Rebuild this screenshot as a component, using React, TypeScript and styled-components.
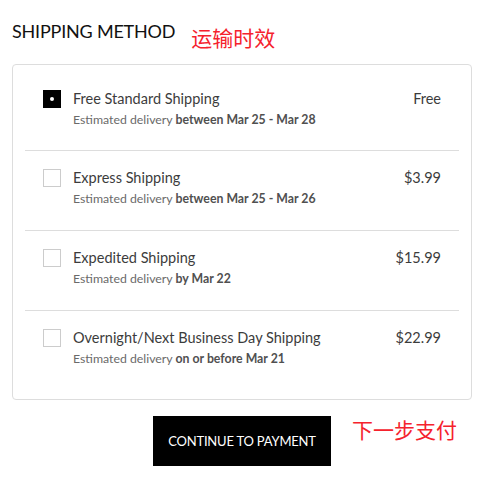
import React, {useState} from 'react'
import styled, {createGlobalStyle} from 'styled-components'

type TShippingOption = {
    id: string
    title: string
    price: string
    deliveryPrefix: string
    deliveryDate: string
}

const options: TShippingOption[] = [
    {id: 'standard', title: 'Free Standard Shipping', price: 'Free', deliveryPrefix: 'between', deliveryDate: 'Mar 25 - Mar 28'},
    {id: 'express', title: 'Express Shipping', price: '$3.99', deliveryPrefix: 'between', deliveryDate: 'Mar 25 - Mar 26'},
    {id: 'expedited', title: 'Expedited Shipping', price: '$15.99', deliveryPrefix: 'by', deliveryDate: 'Mar 22'},
    {id: 'overnight', title: 'Overnight/Next Business Day Shipping', price: '$22.99', deliveryPrefix: 'on or before', deliveryDate: 'Mar 21'},
]

const GlobalStyle = createGlobalStyle`
  body {
    margin: 0;
    background: #fff;
    font-family: "Lato", "Liberation Sans", sans-serif;
    color: #222;
  }
`

const Page = styled.div`
  width: 460px;
  padding: 18px 12px;
`

const Header = styled.div`
  display: flex;
  align-items: flex-start;
  gap: 16px;
  height: 46px;
`

const Title = styled.h2`
  margin: 0;
  padding-top: 2px;
  font-size: 18px;
  font-weight: 400;
  letter-spacing: -0.2px;
  color: #111;
`

const Note = styled.span<{offset?: number}>`
  font-family: "Noto Sans CJK SC", sans-serif;
  font-size: 21px;
  line-height: 1;
  color: #f5222d;
  padding-top: ${p => p.offset ?? 0}px;
`

const Card = styled.div`
  border: 1px solid #ddd;
  border-radius: 4px;
  padding: 5px 12px 9px;
`

const Row = styled.label`
  display: flex;
  align-items: flex-start;
  height: 80px;
  box-sizing: border-box;
  padding: 20px 18px 0 18px;
  cursor: pointer;

  & + & {
    border-top: 1px solid #ddd;
    padding-top: 18px;
  }
`

const Box = styled.span<{checked: boolean}>`
  flex: none;
  width: 16px;
  height: 16px;
  border: 1px solid ${p => p.checked ? '#000' : '#ccc'};
  background: ${p => p.checked ? '#000' : '#fff'};
  display: flex;
  align-items: center;
  justify-content: center;

  &::after {
    content: '';
    display: ${p => p.checked ? 'block' : 'none'};
    width: 4px;
    height: 4px;
    border-radius: 50%;
    background: #fff;
  }
`

const Info = styled.div`
  flex: 1;
  margin-left: 12px;
`

const OptionName = styled.div`
  font-size: 14.5px;
  line-height: 18px;
  color: #3c3c3c;
`

const Delivery = styled.div`
  margin-top: 4px;
  font-size: 12.3px;
  line-height: 16px;
  color: #6a6a6a;

  b {
    color: #505050;
    font-weight: 700;
  }
`

const Price = styled.div`
  font-size: 14.5px;
  line-height: 18px;
  color: #3c3c3c;
`

const Footer = styled.div`
  display: grid;
  grid-template-columns: 1fr auto 1fr;
  align-items: start;
  margin-top: 16px;
`

const Button = styled.button`
  grid-column: 2;
  width: 178px;
  height: 50px;
  border: none;
  background: #000;
  color: #fff;
  font-family: "Lato", "Liberation Sans", sans-serif;
  font-size: 13px;
  letter-spacing: -0.2px;
  cursor: pointer;
`

const FooterNote = styled(Note)`
  margin-left: 21px;
`

const App = () => {
    const [selected, setSelected] = useState('standard')

    return (
        <Page>
            <GlobalStyle/>
            <Header>
                <Title>SHIPPING METHOD</Title>
                <Note offset={9}>运输时效</Note>
            </Header>

            <Card>
                {options.map(o => (
                    <Row key={o.id} onClick={() => setSelected(o.id)}>
                        <Box checked={selected === o.id}/>
                        <Info>
                            <OptionName>{o.title}</OptionName>
                            <Delivery>Estimated delivery <b>{o.deliveryPrefix} {o.deliveryDate}</b></Delivery>
                        </Info>
                        <Price>{o.price}</Price>
                    </Row>
                ))}
            </Card>

            <Footer>
                <Button>CONTINUE TO PAYMENT</Button>
                <FooterNote offset={3}>下一步支付</FooterNote>
            </Footer>
        </Page>
    )
}

export default App
